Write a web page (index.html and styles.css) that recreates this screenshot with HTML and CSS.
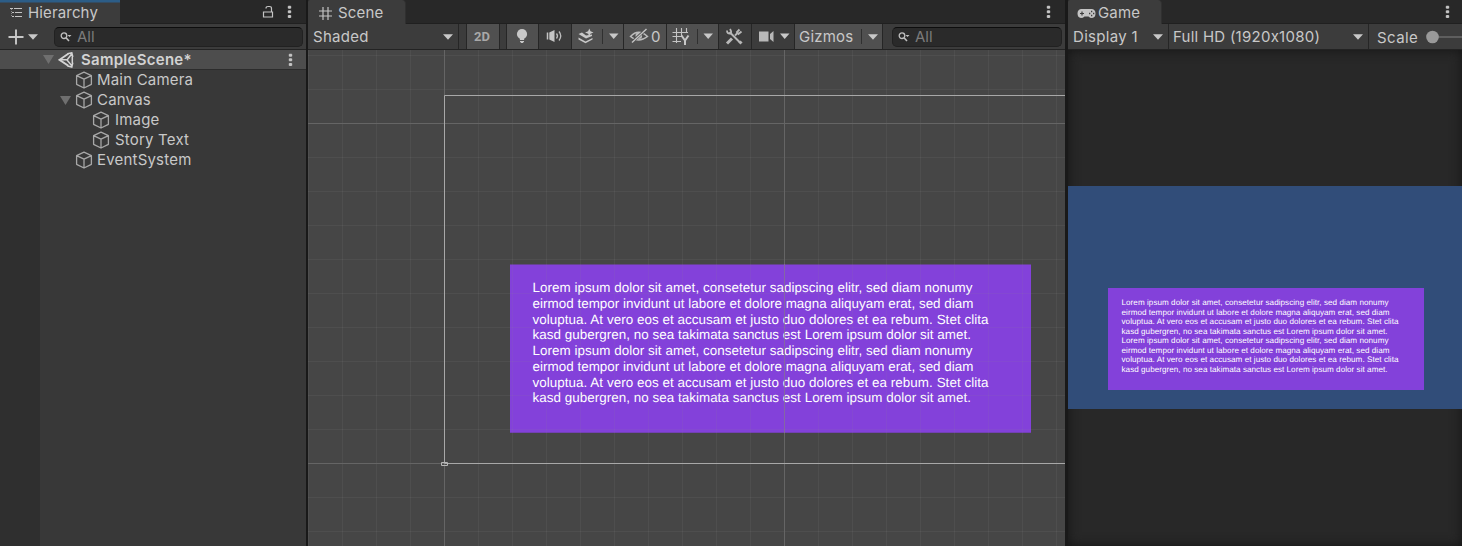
FILE: index.html
```html
<!DOCTYPE html>
<html lang="en">
<head>
<meta charset="utf-8">
<title>Editor</title>
<link rel="stylesheet" href="styles.css">
</head>
<body>
<svg width="0" height="0" class="defs">
  <defs>
    <symbol id="cube" viewBox="0 0 18 18"><path d="M9 1.2 16.4 4.7V13.3L9 17 1.6 13.3V4.7ZM1.6 4.7 9 8.2 16.4 4.7M9 8.2V17" fill="none" stroke="#a8a8a8" stroke-width="1.3" stroke-linejoin="round"/></symbol>
    <symbol id="dots" viewBox="0 0 5 14"><path d="M1.300.7h2.400v.5h.5v2h-.5v.5H1.300v-.5H.8v-2h.5zM1.300 5.300h2.400v.5h.5v2h-.5v.5H1.300v-.5H.8v-2h.5zM1.300 9.900h2.400v.5h.5v2h-.5v.5H1.300v-.5H.8v-2h.5z" fill="#c4c4c4"/></symbol>
    <symbol id="down" viewBox="0 0 10 6"><path d="M0 0.300h10L5 5.800z" fill="#c8c8c8"/></symbol>
    <symbol id="fold" viewBox="0 0 11 9"><path d="M0 0h11L5.500 9z" fill="#6f6f6f"/></symbol>
    <symbol id="search" viewBox="0 0 12 10"><circle cx="4" cy="3.700" r="2.800" fill="none" stroke="#c0c0c0" stroke-width="1.300"/><path d="M6 5.700 9 9" stroke="#c0c0c0" stroke-width="1.600"/><path d="M7.500 3h4L9.500 5z" fill="#c0c0c0"/></symbol>
  </defs>
</svg>
<main class="editor">
  <section class="panel hierarchy">
    <header class="tabs">
      <div class="tab tab-focus">
        <svg class="i-list" width="14" height="12" viewBox="0 0 14 12"><path d="M1 1.500h3M5 1.500h8M3 5.500h2M6 5.500h7M3 9.500h2M6 9.500h7" stroke="#c4c4c4" stroke-width="1.100"/><path d="M2.500 2v8" stroke="#888" stroke-dasharray="1 1"/></svg>
        <span>Hierarchy</span>
      </div>
      <svg class="lock" width="12" height="14" viewBox="0 0 12 14"><path d="M1.500 7h9v5h-9zM9.500 7V3.500Q9.500 1.500 7.500 1.500H6Q4 1.500 4 3.500" fill="none" stroke="#c4c4c4" stroke-width="1.200"/></svg>
      <svg class="dots" width="5" height="14"><use href="#dots"/></svg>
    </header>
    <div class="bar">
      <svg class="plus" width="16" height="16"><path d="M8 .5v15M.5 8h15" stroke="#c8c8c8" stroke-width="1.900"/></svg>
      <svg class="plus-arrow" width="10" height="6"><use href="#down"/></svg>
      <div class="search search-left"><svg width="12" height="10"><use href="#search"/></svg><span>All</span></div>
    </div>
    <div class="tree">
      <div class="row scene-row">
        <svg width="11" height="9"><use href="#fold"/></svg>
        <svg class="unity" width="16" height="16" viewBox="0 0 16 16"><path d="M10.300 1.800 1.500 7.800 10.300 13.800" fill="none" stroke="#d4d4d4" stroke-width="1.900"/><path d="M9.500 1.700 13.800.8 14.800 5M14.800 10.500 13.800 15 9.500 14M14 1.500 9 8l5 6M2 7.800h7M14.300 4.500v7" fill="none" stroke="#d4d4d4" stroke-width="1.500"/></svg>
        <b>SampleScene*</b>
        <svg class="dots" width="5" height="14"><use href="#dots"/></svg>
      </div>
      <div class="nodes">
        <div class="row l1"><svg width="18" height="18"><use href="#cube"/></svg><span>Main Camera</span></div>
        <div class="row l1 open"><svg width="11" height="9"><use href="#fold"/></svg><svg width="18" height="18"><use href="#cube"/></svg><span>Canvas</span></div>
        <div class="row l2"><svg width="18" height="18"><use href="#cube"/></svg><span>Image</span></div>
        <div class="row l2"><svg width="18" height="18"><use href="#cube"/></svg><span>Story Text</span></div>
        <div class="row l1"><svg width="18" height="18"><use href="#cube"/></svg><span>EventSystem</span></div>
      </div>
    </div>
  </section>

  <section class="panel scene">
    <header class="tabs">
      <div class="tab">
        <svg class="i-hash" width="13" height="13"><path d="M4 0v13M9 0v13M0 4h13M0 9h13" stroke="#c4c4c4" stroke-width="1.200"/></svg>
        <span>Scene</span>
      </div>
      <svg class="dots" width="5" height="14"><use href="#dots"/></svg>
    </header>
    <div class="bar">
      <div class="seg shaded"><span>Shaded</span><svg width="10" height="6"><use href="#down"/></svg></div>
      <div class="seg gap-a"></div>
      <div class="seg on two-d"><span>2D</span></div>
      <div class="seg gap-b"></div>
      <div class="seg on w31"><svg width="31" height="25"><circle cx="15" cy="10" r="5.100" fill="#c8c8c8"/><path d="M12 12h6l-1 4h-4zM13 17h4v1.300h-1V19h-2v-.7h-1z" fill="#c8c8c8"/></svg></div>
      <div class="seg w32"><svg width="32" height="25"><path d="M8.500 8.500v7" stroke="#c4c4c4" stroke-width="1.500"/><path d="M10.300 8.500 15.500 6v12L10.300 15.500z" fill="#c4c4c4"/><path d="M17.500 9.500q2 2.500 0 5M20 7.500q3.500 4.500 0 9" fill="none" stroke="#bbb" stroke-width="1.300"/></svg></div>
      <div class="seg on w51"><svg width="51" height="25"><path d="M6.500 10 10 8.500 14 11.500 20 10.500 20 12 14 14.500z" fill="#c8c8c8"/><path d="M6.500 13.500 13.500 17.500 20.500 14v1.500L13.500 19.200 6.500 15.500z" fill="#c8c8c8"/><path d="M17.300 4.500 18.500 7.300 21.500 8.500 18.500 9.700 17.300 12.500 16.100 9.700 13 8.500 16.100 7.300z" fill="#c8c8c8"/><path d="M30.500 5v15" stroke="#303030"/><path d="M37 9.500h9.500L41.700 15z" fill="#c8c8c8"/></svg></div>
      <div class="seg on eye"><svg width="25" height="25"><path d="M6.500 12.500Q14.500 4 23.500 12.500 14.500 19.500 6.500 12.500Z" fill="none" stroke="#bcbcbc" stroke-width="1.500"/><circle cx="14.800" cy="11.800" r="3.300" fill="#bcbcbc"/><path d="M22 5.500 8 18" stroke="#505050" stroke-width="3"/><path d="M22.500 5 8 18.500" stroke="#c4c4c4" stroke-width="1.400"/></svg><span>0</span></div>
      <div class="seg on w51"><svg width="51" height="25"><path d="M9.500 4v15M14.500 4v9M19.500 4v5M5.500 8.500H21M5.500 12.500H15M5.500 17.500H14" stroke="#c4c4c4" stroke-width="1.100"/><path d="M14.500 11.500 18 16.500 21.500 11.500M18 16v5" fill="none" stroke="#c8c8c8" stroke-width="2"/><path d="M30.500 5v15" stroke="#303030"/><path d="M36.500 9.500H46L41.200 15z" fill="#c8c8c8"/></svg></div>
      <div class="seg w32"><svg width="32" height="25"><path d="M10.500 8 21 18.500" stroke="#b8b8b8" stroke-width="2"/><path d="M20.500 17.500 22.500 19.500" stroke="#b8b8b8" stroke-width="3"/><path d="M8 6.500Q8 10 11.500 9.500 13 8 11 5" fill="none" stroke="#b8b8b8" stroke-width="1.800"/><path d="M8 19.500 13 14.500" stroke="#b8b8b8" stroke-width="3"/><path d="M16 11.500 18.500 9" stroke="#b8b8b8" stroke-width="1.800"/><path d="M20.500 5.500 18 8 19.500 10 22.500 7.500" fill="none" stroke="#b8b8b8" stroke-width="1.900"/></svg></div>
      <div class="seg w42"><svg width="42" height="25"><path d="M7 7.500h9.500v10H7zM18 10l3.500-3v11L18 15z" fill="#b8b8b8"/><path d="M28 9.500h9.500L32.700 15z" fill="#c8c8c8"/></svg></div>
      <div class="seg on gizmos"><span>Gizmos</span><i></i><svg width="10" height="6"><use href="#down"/></svg></div>
      <div class="search search-mid"><svg width="12" height="10"><use href="#search"/></svg><span>All</span></div>
    </div>
    <div class="canvas">
      <svg class="view" width="757" height="496" viewBox="308 50 757 496">
        <defs>
          <pattern id="minor" x="444" y="55" width="34" height="34" patternUnits="userSpaceOnUse"><path d="M.5 0v34M0 .5h34" stroke="#fff" stroke-opacity=".045" fill="none"/></pattern>
          <pattern id="over" x="444" y="55" width="34" height="34" patternUnits="userSpaceOnUse"><path d="M.5 0v34M0 .5h34" stroke="#888" stroke-opacity=".1" fill="none"/></pattern>
        </defs>
        <path d="M308 50h757v496H308z" fill="#464646"/>
        <path d="M308 50h757v496H308z" fill="url(#minor)"/>
        <path d="M444.500 50v496M784.500 50v496M308 123.500h757M308 463.500h757" stroke="#656565"/>
        <path d="M1065 95.500H444.500V463.500H1065" fill="none" stroke="#a8a8a8"/>
        <path d="M441.500 462.500h6v3h-6z" fill="none" stroke="#b8b8b8"/>
        <path d="M510 264.400h521v168.400H510z" fill="#8341da"/>
        <g class="story" font-size="13.400">
          <text x="532.500" y="292.300" textLength="440">Lorem ipsum dolor sit amet, consetetur sadipscing elitr, sed diam nonumy</text>
          <text x="532.500" y="308" textLength="441">eirmod tempor invidunt ut labore et dolore magna aliquyam erat, sed diam</text>
          <text x="532.500" y="323.700" textLength="456">voluptua. At vero eos et accusam et justo duo dolores et ea rebum. Stet clita</text>
          <text x="532.500" y="339.400" textLength="438.500">kasd gubergren, no sea takimata sanctus est Lorem ipsum dolor sit amet.</text>
          <text x="532.500" y="355.100" textLength="440">Lorem ipsum dolor sit amet, consetetur sadipscing elitr, sed diam nonumy</text>
          <text x="532.500" y="370.800" textLength="441">eirmod tempor invidunt ut labore et dolore magna aliquyam erat, sed diam</text>
          <text x="532.500" y="386.500" textLength="456">voluptua. At vero eos et accusam et justo duo dolores et ea rebum. Stet clita</text>
          <text x="532.500" y="402.200" textLength="438.500">kasd gubergren, no sea takimata sanctus est Lorem ipsum dolor sit amet.</text>
        </g>
        <path d="M510 264.400h521v168.400H510z" fill="url(#over)"/>
        <path d="M784.500 264v169" stroke="#85758f" stroke-opacity=".7"/>
      </svg>
    </div>
  </section>

  <section class="panel game">
    <header class="tabs">
      <div class="tab">
        <svg class="i-pad" width="19" height="11" viewBox="0 0 19 11"><path d="M4 1H15Q18.500 1.500 18.500 5.500T15 10Q13 10 11.500 8.500H7.500Q6 10 4 10 .5 9.500.5 5.500T4 1Z" fill="#c4c4c4"/><path d="M3 5.500h4M5 3.500v4" stroke="#3c3c3c" stroke-width="1.200"/><path d="M12 5.500h1.300M14 3.500h1.300M14 7.500h1.300M16 5.500h1.300" stroke="#3c3c3c" stroke-width="1.300"/></svg>
        <span>Game</span>
      </div>
      <svg class="dots" width="5" height="14"><use href="#dots"/></svg>
    </header>
    <div class="bar">
      <div class="seg display"><span>Display 1</span><svg width="10" height="6"><use href="#down"/></svg></div>
      <div class="seg res"><span>Full HD (1920x1080)</span><svg width="10" height="6"><use href="#down"/></svg></div>
      <div class="scale"><span>Scale</span><svg width="36" height="14"><path d="M7 7h29" stroke="#5e5e5e" stroke-width="2"/><circle cx="6.500" cy="7" r="6.300" fill="#999"/></svg></div>
    </div>
    <div class="stage">
      <svg class="view" width="394" height="223" viewBox="1068 186 394 223">
        <path d="M1068 186h394v223h-394z" fill="#314d79"/>
        <path d="M1108 288h316v102h-316z" fill="#8341da"/>
        <g class="story" font-size="8.100">
          <text x="1121.500" y="305" textLength="267">Lorem ipsum dolor sit amet, consetetur sadipscing elitr, sed diam nonumy</text>
          <text x="1121.500" y="314.500" textLength="268">eirmod tempor invidunt ut labore et dolore magna aliquyam erat, sed diam</text>
          <text x="1121.500" y="324" textLength="277">voluptua. At vero eos et accusam et justo duo dolores et ea rebum. Stet clita</text>
          <text x="1121.500" y="333.500" textLength="266">kasd gubergren, no sea takimata sanctus est Lorem ipsum dolor sit amet.</text>
          <text x="1121.500" y="343" textLength="267">Lorem ipsum dolor sit amet, consetetur sadipscing elitr, sed diam nonumy</text>
          <text x="1121.500" y="352.500" textLength="268">eirmod tempor invidunt ut labore et dolore magna aliquyam erat, sed diam</text>
          <text x="1121.500" y="362" textLength="277">voluptua. At vero eos et accusam et justo duo dolores et ea rebum. Stet clita</text>
          <text x="1121.500" y="371.500" textLength="266">kasd gubergren, no sea takimata sanctus est Lorem ipsum dolor sit amet.</text>
        </g>
      </svg>
    </div>
  </section>
</main>
</body>
</html>
```
FILE: styles.css
```css
* { box-sizing: border-box; }
body { margin: 0; background: #191919; overflow: hidden; }
svg { display: block; flex: none; }
.defs { position: absolute; }
.editor {
  display: grid; grid-template-columns: 306px 757px 394px; column-gap: 0;
  width: 1462px; height: 546px;
  font: 15px/20px Inter, "Liberation Sans", sans-serif; letter-spacing: .4px; color: #c8c8c8;
}
.scene { margin-left: 2px; width: 757px; }
.game { margin-left: 5px; width: 394px; }
.panel { display: flex; flex-direction: column; height: 546px; overflow: hidden; }
.tabs { height: 24px; display: flex; align-items: center; background: #282828; box-shadow: inset 0 -1px #202020; flex: none; letter-spacing: .15px; }
.tab { height: 24px; display: flex; align-items: center; background: #3c3c3c; border-right: 1px solid #303030; border-radius: 2px 4px 0 0; padding-top: 2px; }
.hierarchy .tab { width: 120px; padding-left: 9px; gap: 5px; border-radius: 0; border-right: 0; }
.tab-focus { box-shadow: inset 0 2.500px #2c5d87; }
.scene .tab { width: 98px; padding-left: 11px; gap: 6px; }
.game .tab { width: 94px; padding-left: 9px; gap: 2px; }
.lock { margin-left: auto; margin-right: 15px; }
.hierarchy .lock { margin-right: 15px; margin-top: -1px; }
.tabs .dots { margin-left: auto; margin-right: 14px; margin-top: -1px; }
.hierarchy .tabs .dots { margin-left: 0; margin-right: 14px; }
.hierarchy .lock { margin-right: 13px; }
.game .tabs .dots { margin-right: 12px; }
.bar { height: 26px; flex: none; display: flex; align-items: center; background: #3c3c3c; border-bottom: 1px solid #232323; }
.plus { margin-left: 8px; }
.plus-arrow { margin-left: 4px; }
.search {
  height: 20px; margin-left: 16px; display: flex; align-items: center; gap: 5px; padding-left: 5px;
  border: 1px solid #212121; border-top-color: #0d0d0d; border-radius: 5px; background: #2a2a2a; color: #7b7b7b; letter-spacing: 0;
}
.search-left { width: 249px; }
.search-mid { width: 170px; margin-left: 9px; }
.tree { flex: 1; display: flex; flex-direction: column; background: #2f2f2f; letter-spacing: .2px; }
.row { height: 20px; display: flex; align-items: center; }
.scene-row { background: #4d4d4d; border-bottom: 1px solid #2c2c2c; padding-left: 43px; flex: none; }
.unity { margin-left: 4px; }
.scene-row b { margin-left: 7px; padding-top: 1px; font-weight: 600; letter-spacing: .28px; color: #d2d2d2; }
.scene-row .dots { margin-left: auto; margin-right: 13px; }
.nodes { flex: 1; margin-left: 40px; background: #383838; }
.l1 { padding-left: 35px; gap: 4px; }
.l1.open { padding-left: 20px; }
.l2 { padding-left: 52px; gap: 5px; }
.seg { height: 25px; flex: none; display: flex; align-items: center; border-right: 1px solid #262626; }
.on { background: #505050; }
.shaded { width: 151px; justify-content: space-between; padding: 0 5px; letter-spacing: .3px; }
.gap-a { width: 8px; }
.gap-b { width: 7px; }
.two-d { width: 33px; padding-right: 2px; justify-content: center; font: 700 13px/20px Roboto, sans-serif; letter-spacing: 0; color: #a8a8a8; }
.w31 { width: 32px; }
.w32 { width: 33px; }
.w51 { width: 52px; }
.w42 { width: 43px; }
.eye { width: 43px; gap: 2px; }
.gizmos { width: 88px; padding-left: 4px; letter-spacing: .2px; }
.gizmos i { width: 1px; height: 15px; margin: 0 6px 0 auto; background: #303030; }
.gizmos svg { margin-right: 4px; }
.display { width: 101px; justify-content: space-between; padding: 0 5px; letter-spacing: .3px; }
.res { width: 200px; justify-content: space-between; padding: 0 5px 0 4px; letter-spacing: .25px; }
.scale { display: flex; align-items: center; gap: 8px; padding-left: 8px; padding-top: 3px; }
.scale svg { margin-top: -3px; }
.canvas { flex: 1; }
.stage { flex: 1; padding-top: 136px; background: #282828; box-shadow: inset 0 0 12px #151515; }
.story { font-family: "Liberation Sans", Arial, sans-serif; fill: #fff; letter-spacing: 0; text-rendering: geometricPrecision; }
```
